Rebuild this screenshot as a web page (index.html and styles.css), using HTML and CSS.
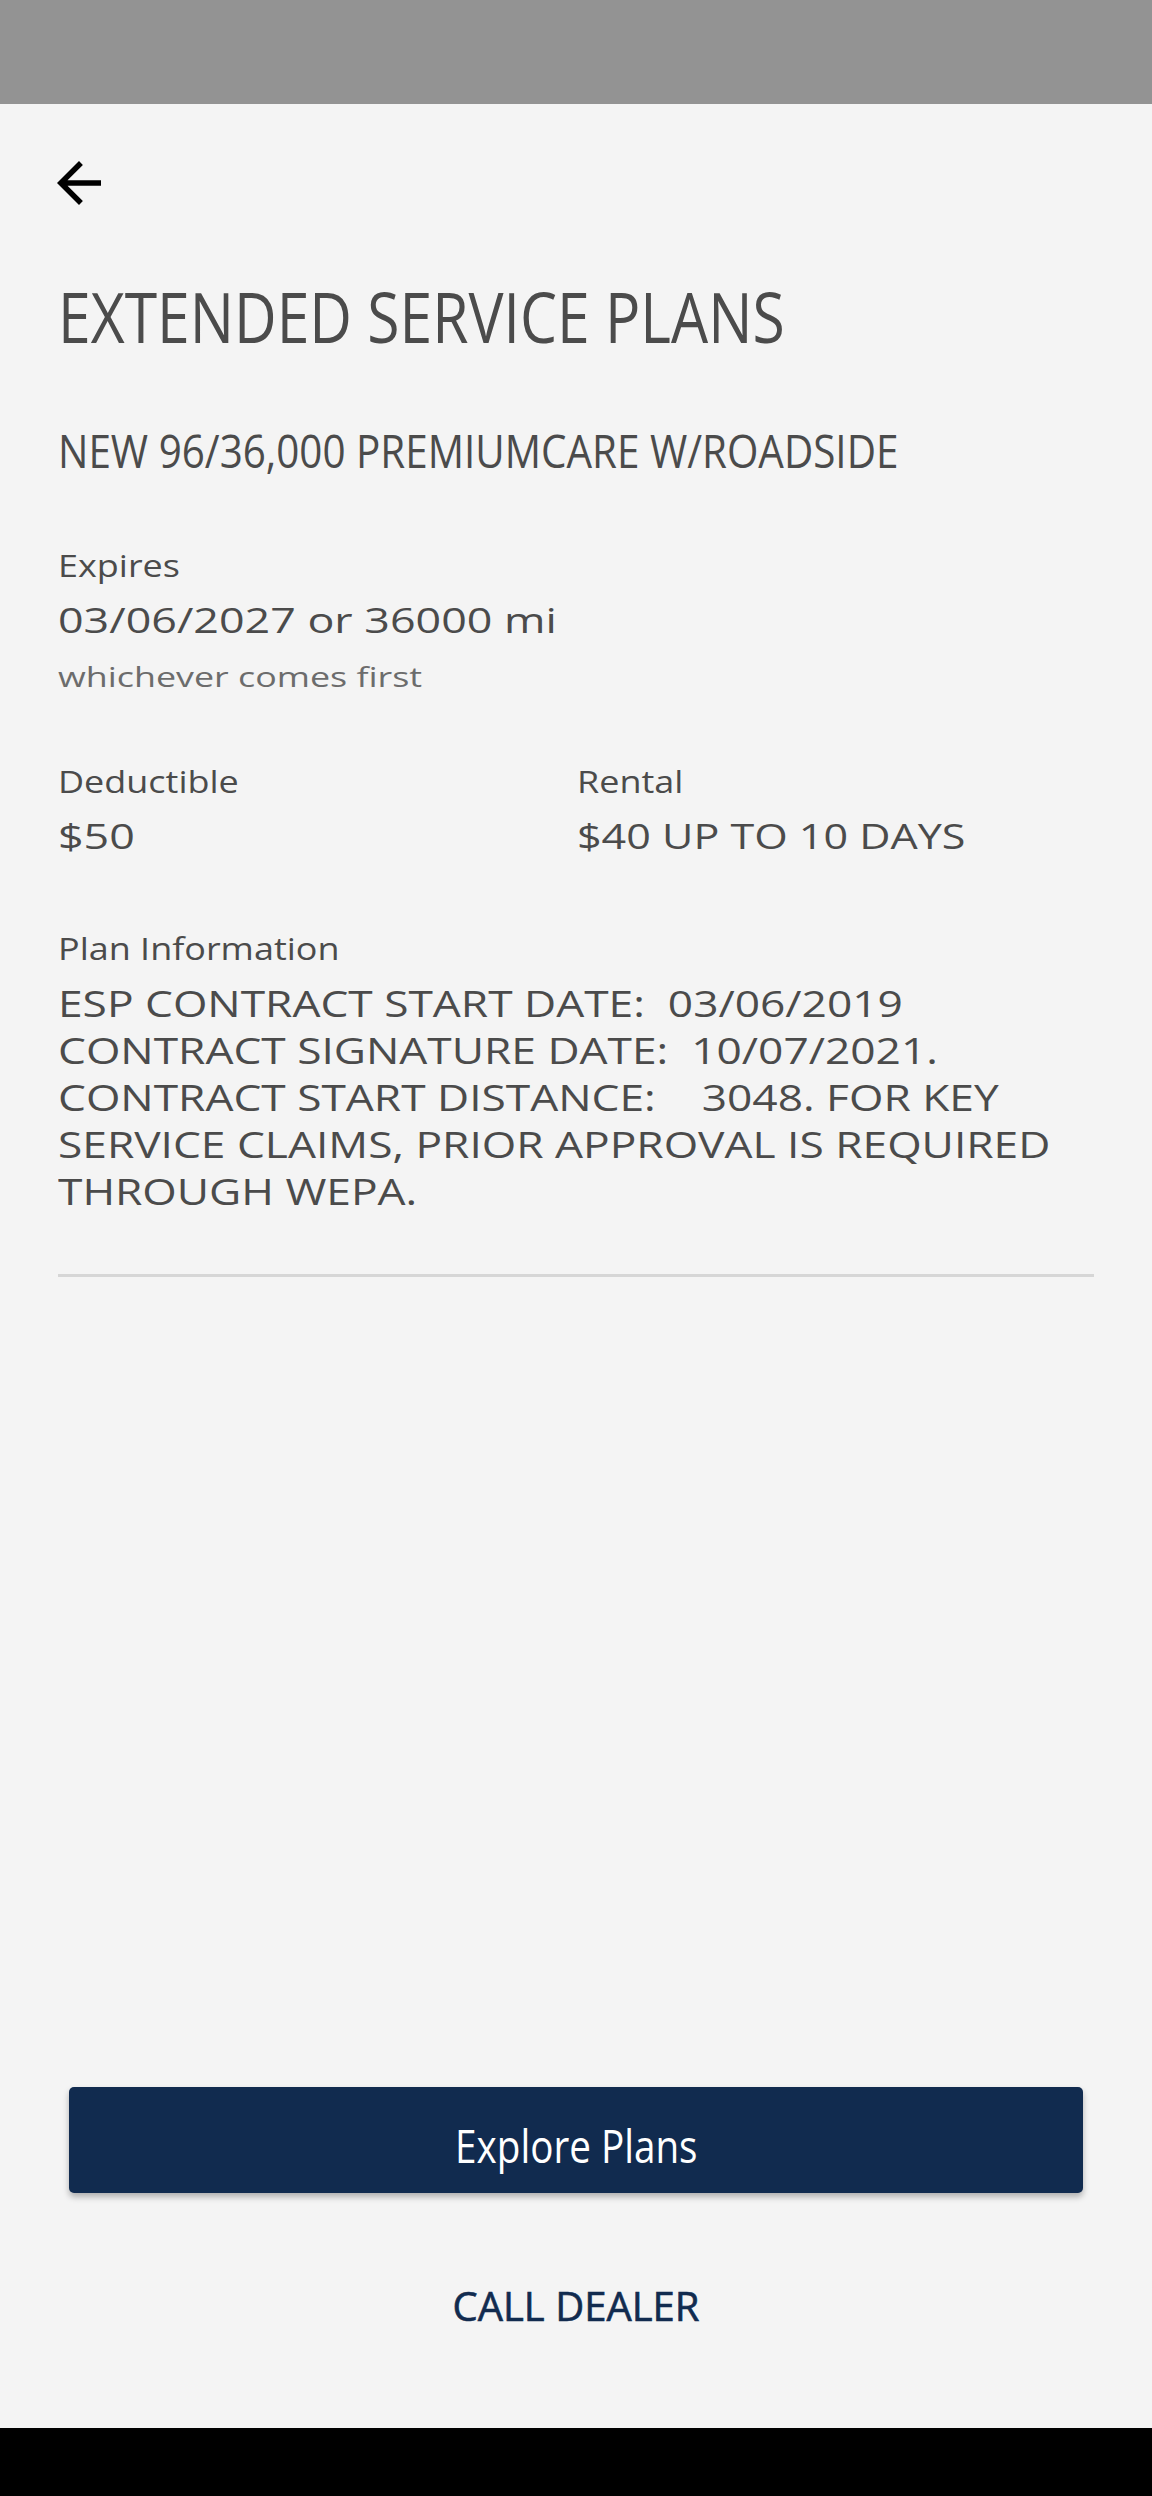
FILE: index.html
```html
<!DOCTYPE html>
<html lang="en">
<head>
<meta charset="utf-8">
<title>Extended Service Plans</title>
<link rel="stylesheet" href="styles.css">
</head>
<body>
<div class="statusbar"></div>
<main class="screen">
  <header class="toolbar">
    <button class="back" aria-label="Back">
      <svg viewBox="0 0 24 24" width="66" height="66"><path d="M20 11H7.83l5.59-5.59L12 4l-8 8 8 8 1.41-1.41L7.83 13H20v-2z" fill="#000"/></svg>
    </button>
  </header>
  <section class="content">
    <h1 class="title">EXTENDED SERVICE PLANS</h1>
    <h2 class="plan-name">NEW 96/36,000 PREMIUMCARE W/ROADSIDE</h2>
    <div class="field expires">
      <div class="label">Expires</div>
      <div class="value">03/06/2027 or 36000 mi</div>
      <div class="note">whichever comes first</div>
    </div>
    <div class="row">
      <div class="field">
        <div class="label">Deductible</div>
        <div class="value">$50</div>
      </div>
      <div class="field">
        <div class="label">Rental</div>
        <div class="value value-caps">$40 UP TO 10 DAYS</div>
      </div>
    </div>
    <div class="field info">
      <div class="label">Plan Information</div>
      <div class="body">ESP CONTRACT START DATE:&nbsp; 03/06/2019<br>CONTRACT SIGNATURE DATE:&nbsp; 10/07/2021.<br>CONTRACT START DISTANCE:&nbsp;&nbsp;&nbsp; 3048. FOR KEY<br>SERVICE CLAIMS, PRIOR APPROVAL IS REQUIRED<br>THROUGH WEPA.</div>
    </div>
    <hr class="divider">
  </section>
  <div class="actions">
    <button class="primary"><span class="primary-text">Explore Plans</span></button>
    <button class="link">CALL DEALER</button>
  </div>
</main>
<div class="navbar"></div>
</body>
</html>
```
FILE: styles.css
```css
html, body {
  margin: 0;
  padding: 0;
}
body {
  width: 1152px;
  height: 2496px;
  background: #f4f4f4;
  color: #4b4b4b;
  font-family: "Open Sans", "Liberation Sans", sans-serif;
  display: flex;
  flex-direction: column;
  overflow: hidden;
}
.statusbar {
  height: 104px;
  background: #939393;
  flex: none;
}
.screen {
  flex: 1;
  display: flex;
  flex-direction: column;
}
.toolbar {
  height: 158px;
  display: flex;
  align-items: center;
  padding-left: 46px;
}
.back {
  width: 66px;
  height: 66px;
  padding: 0;
  border: 0;
  background: none;
  display: block;
}
.back svg { display: block; }
.content {
  padding: 0 58px;
}

/* condensed headline styles */
.title,
.plan-name {
  width: fit-content;
  font-weight: normal;
  white-space: nowrap;
  transform-origin: left center;
  color: #4b4b4b;
}
.title {
  margin: 14px 0 0;
  font-size: 70px;
  line-height: 80px;
  transform: scaleX(0.84);
}
.plan-name {
  margin: 66px 0 0;
  font-size: 46px;
  line-height: 56px;
  transform: scaleX(0.878);
}

/* wide body styles */
.label,
.value,
.note,
.body {
  width: fit-content;
  white-space: nowrap;
  transform-origin: left center;
}
.field .label {
  font-size: 31px;
  line-height: 40px;
  color: #4b4b4b;
  transform: scaleX(1.16);
}
.field .value {
  margin-top: 12px;
  font-size: 35px;
  line-height: 46px;
  color: #4b4b4b;
  transform: scaleX(1.28);
}
.field .value-caps {
  transform: scaleX(1.23);
}
.field .note {
  margin-top: 14px;
  font-size: 28px;
  line-height: 38px;
  color: #6c6c6c;
  transform: scaleX(1.28);
}
.expires { margin-top: 67px; }
.row {
  margin-top: 66px;
  display: grid;
  grid-template-columns: 519px 1fr;
}
.info { margin-top: 69px; }
.info .body {
  margin-top: 12px;
  font-size: 36px;
  line-height: 47px;
  color: #4b4b4b;
  transform: scaleX(1.23);
}
.divider {
  margin: 59px 0 0;
  border: 0;
  height: 3px;
  background: #d6d6d6;
}
.actions {
  margin-top: auto;
  padding: 0 69px 92px;
  display: flex;
  flex-direction: column;
  align-items: stretch;
}
.primary {
  height: 106px;
  box-sizing: border-box;
  padding: 10px 0 0;
  border: 0;
  border-radius: 5px;
  background: #112b4f;
  color: #fff;
  font-family: "Open Sans", "Liberation Sans", sans-serif;
  font-size: 46px;
  line-height: 96px;
  box-shadow: 0 4px 6px rgba(0, 0, 0, 0.28);
}
.primary-text {
  display: inline-block;
  transform: scaleX(0.84);
}
.link {
  margin-top: 83px;
  border: 0;
  padding: 0;
  background: none;
  color: #112b4f;
  font-family: "Open Sans", "Liberation Sans", sans-serif;
  font-weight: 400;
  font-size: 40px;
  line-height: 60px;
  -webkit-text-stroke: 0.6px #112b4f;
}
.navbar {
  height: 68px;
  background: #000;
  flex: none;
}
```
